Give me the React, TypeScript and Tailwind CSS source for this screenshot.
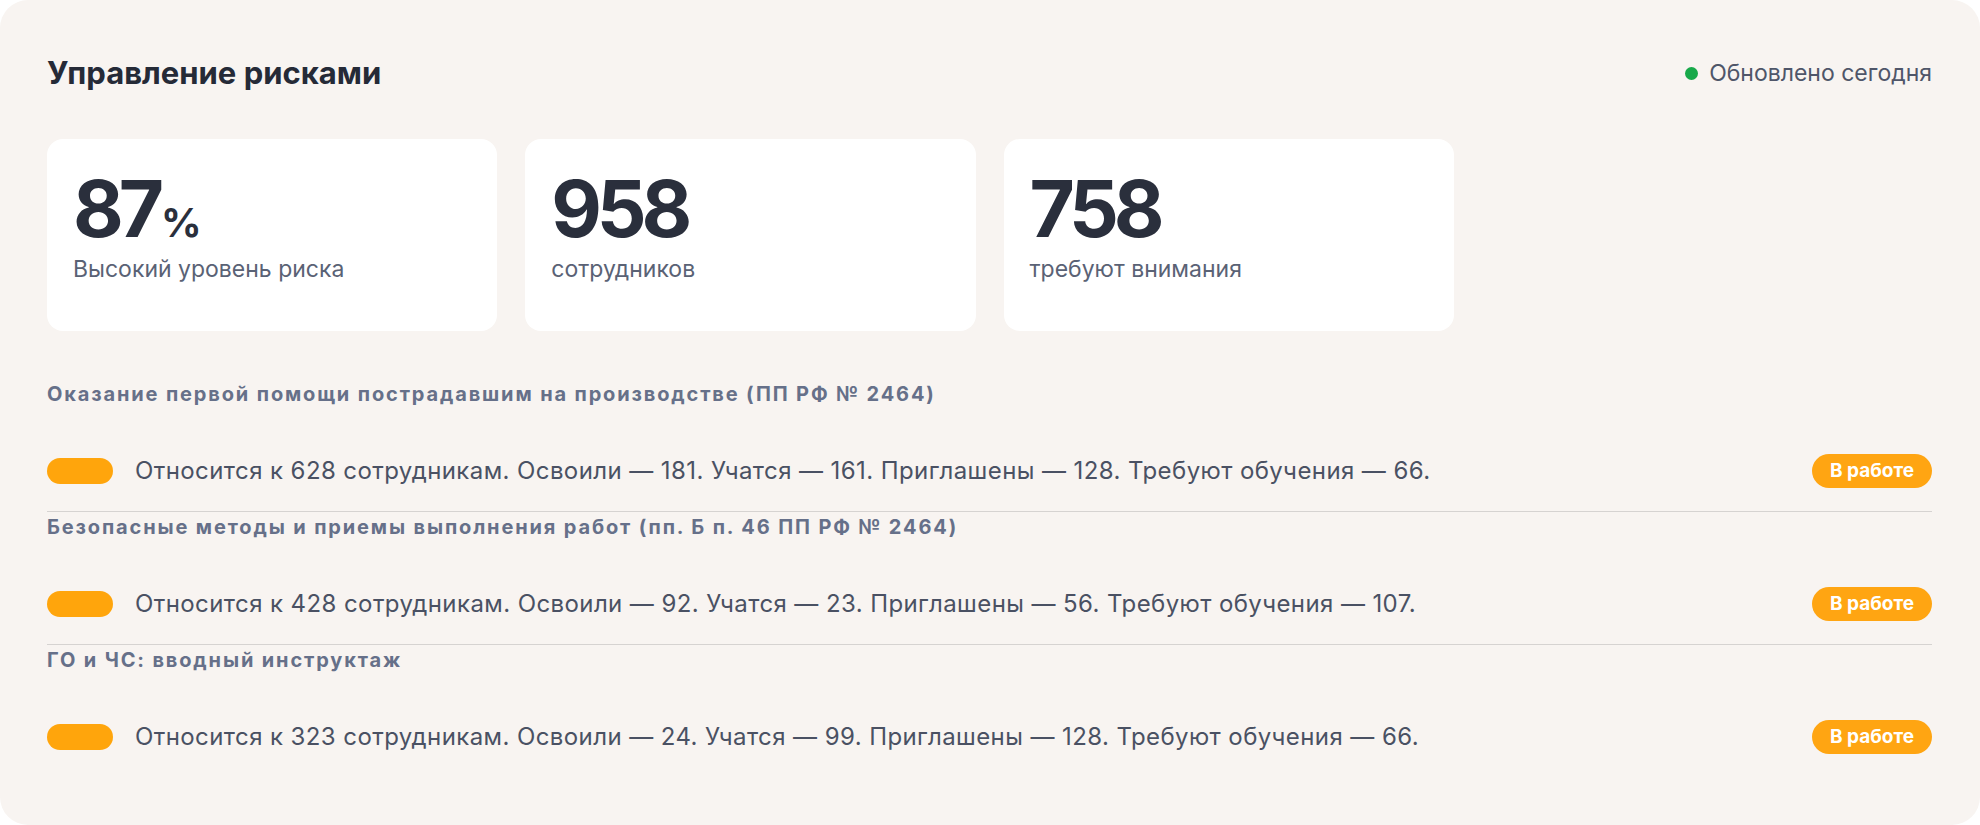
import React from 'react';

type Stat = { value: string; suffix?: string; label: string };

type Course = {
  title: string;
  total: number;
  done: number;
  learning: number;
  invited: number;
  needed: number;
  status: string;
};

const stats: Stat[] = [
  { value: '87', suffix: '%', label: 'Высокий уровень риска' },
  { value: '958', label: 'сотрудников' },
  { value: '758', label: 'требуют внимания' },
];

const courses: Course[] = [
  {
    title: 'Оказание первой помощи пострадавшим на производстве (ПП РФ № 2464)',
    total: 628,
    done: 181,
    learning: 161,
    invited: 128,
    needed: 66,
    status: 'В работе',
  },
  {
    title: 'Безопасные методы и приемы выполнения работ (пп. Б п. 46 ПП РФ № 2464)',
    total: 428,
    done: 92,
    learning: 23,
    invited: 56,
    needed: 107,
    status: 'В работе',
  },
  {
    title: 'ГО и ЧС: вводный инструктаж',
    total: 323,
    done: 24,
    learning: 99,
    invited: 128,
    needed: 66,
    status: 'В работе',
  },
];

const StatCard = ({ stat }: { stat: Stat }) => (
  <div className="h-[192px] rounded-2xl bg-white pl-[26px] pr-7 pt-[31px]">
    <div className="flex items-baseline text-[78px] font-bold leading-none tracking-[-0.065em] text-[#2a2f3c]">
      {stat.value}
      {stat.suffix && <span className="ml-0.5 text-[40px] tracking-[-0.02em]">{stat.suffix}</span>}
    </div>
    <div className="mt-[5px] text-[23px] leading-[33px] text-[#5a6275]">{stat.label}</div>
  </div>
);

const CourseRow = ({ course, last }: { course: Course; last: boolean }) => (
  <div className={last ? '' : 'border-b border-[#d6d3d1]'}>
    <h3 className="pt-px text-[20px] font-bold leading-[28px] tracking-[0.093em] text-[#667089]">
      {course.title}
    </h3>
    <div className="mt-[46px] mb-[23px] flex h-[34px] items-center">
      <span className="h-[26px] w-[66px] shrink-0 rounded-full bg-[#ffa50c]" />
      <p className="ml-[22px] flex-1 text-[24px] tracking-[0.017em] text-[#4a5163]">
        Относится к {course.total} сотрудникам. Освоили — {course.done}. Учатся — {course.learning}.
        Приглашены — {course.invited}. Требуют обучения — {course.needed}.
      </p>
      <span className="flex h-[34px] w-[120px] items-center justify-center rounded-full bg-[#ffa512] text-[19px] font-bold text-white">
        {course.status}
      </span>
    </div>
  </div>
);

export default function App() {
  return (
    <div
      className="min-h-[825px] bg-white"
      style={{ fontFamily: 'Inter, "Noto Sans", "Liberation Sans", sans-serif' }}
    >
      <section className="h-[825px] rounded-[28px] bg-[#f8f4f1] pl-[47px] pr-12 pt-12">
        {/* header */}
        <div className="flex h-[50px] items-center justify-between">
          <h1 className="text-[31px] font-bold text-[#252a37]">Управление рисками</h1>
          <div className="flex items-center gap-[11px] text-[23px] text-[#4f5669]">
            <span className="h-[13px] w-[13px] rounded-full bg-[#18a94a]" />
            Обновлено сегодня
          </div>
        </div>

        {/* summary cards */}
        <div className="mt-[41px] grid grid-cols-4 gap-7">
          {stats.map((s) => (
            <StatCard key={s.label} stat={s} />
          ))}
        </div>

        {/* courses */}
        <div className="mt-[48px]">
          {courses.map((c, i) => (
            <CourseRow key={c.title} course={c} last={i === courses.length - 1} />
          ))}
        </div>
      </section>
    </div>
  );
}
